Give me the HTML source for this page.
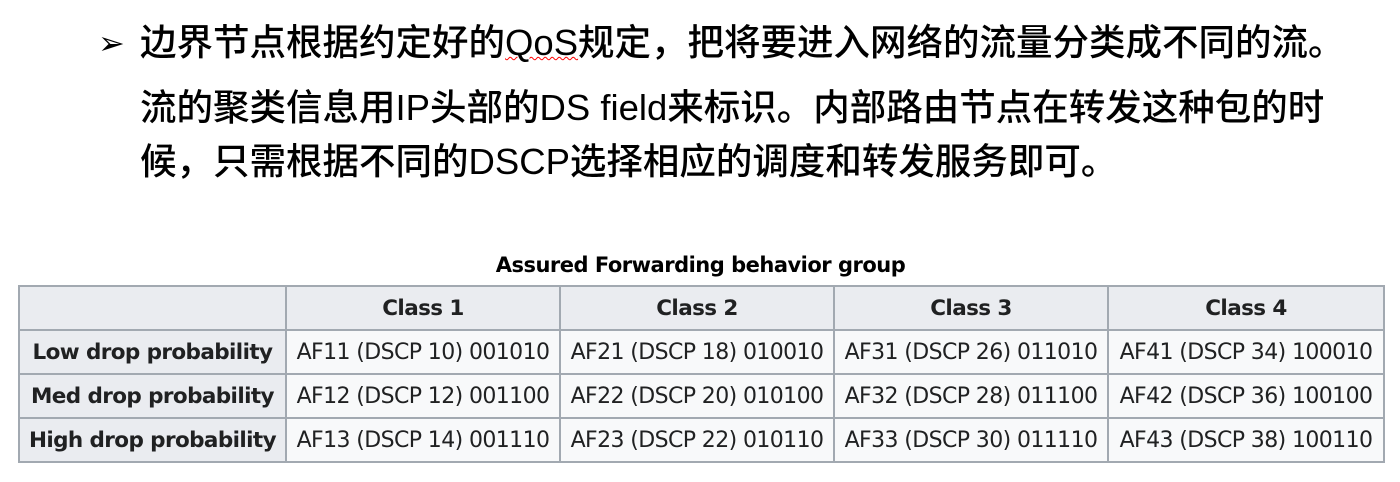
<!DOCTYPE html>
<html><head><meta charset="utf-8"><style>
body{margin:0;width:1400px;height:482px;background:#fff;position:relative;overflow:hidden;font-family:"Liberation Sans","Noto Sans CJK SC",sans-serif}
.l{position:absolute;left:140px;font-size:36.5px;color:#000;white-space:nowrap;line-height:40px;font-weight:500}
.cap{position:absolute;left:18px;width:1365px;top:253px;text-align:center;font-weight:bold;font-size:21px;font-family:"DejaVu Sans",sans-serif;letter-spacing:-0.5px}
table{position:absolute;left:18px;top:285px;border-collapse:collapse;font-family:"DejaVu Sans",sans-serif;font-size:22px;color:#202122}
td,th{border:2px solid #a2a9b1;padding:0;height:42px;white-space:nowrap;letter-spacing:-0.6px}
th{background:#eaecf0;font-weight:bold;font-size:21.5px}
td{background:#f8f9fa;text-align:center}
</style></head><body>
<div class="l" style="top:23px;left:98px;font-size:32px">➢</div>
<div class="l" style="top:23px">边界节点根据约定好的<span style="text-decoration:underline wavy red;text-decoration-thickness:1px">QoS</span>规定，把将要进入网络的流量分类成不同的流。</div>
<div class="l" style="top:88px">流的聚类信息用IP头部的DS field来标识。内部路由节点在转发这种包的时</div>
<div class="l" style="top:142px">候，只需根据不同的DSCP选择相应的调度和转发服务即可。</div>
<div class="cap">Assured Forwarding behavior group</div>
<table>
<tr><th style="width:265px"></th><th style="width:272px">Class 1</th><th style="width:272px">Class 2</th><th style="width:272px">Class 3</th><th style="width:274px">Class 4</th></tr>
<tr><th>Low drop probability</th><td>AF11 (DSCP 10) 001010</td><td>AF21 (DSCP 18) 010010</td><td>AF31 (DSCP 26) 011010</td><td>AF41 (DSCP 34) 100010</td></tr>
<tr><th>Med drop probability</th><td>AF12 (DSCP 12) 001100</td><td>AF22 (DSCP 20) 010100</td><td>AF32 (DSCP 28) 011100</td><td>AF42 (DSCP 36) 100100</td></tr>
<tr><th>High drop probability</th><td>AF13 (DSCP 14) 001110</td><td>AF23 (DSCP 22) 010110</td><td>AF33 (DSCP 30) 011110</td><td>AF43 (DSCP 38) 100110</td></tr>
</table>
</body></html>
